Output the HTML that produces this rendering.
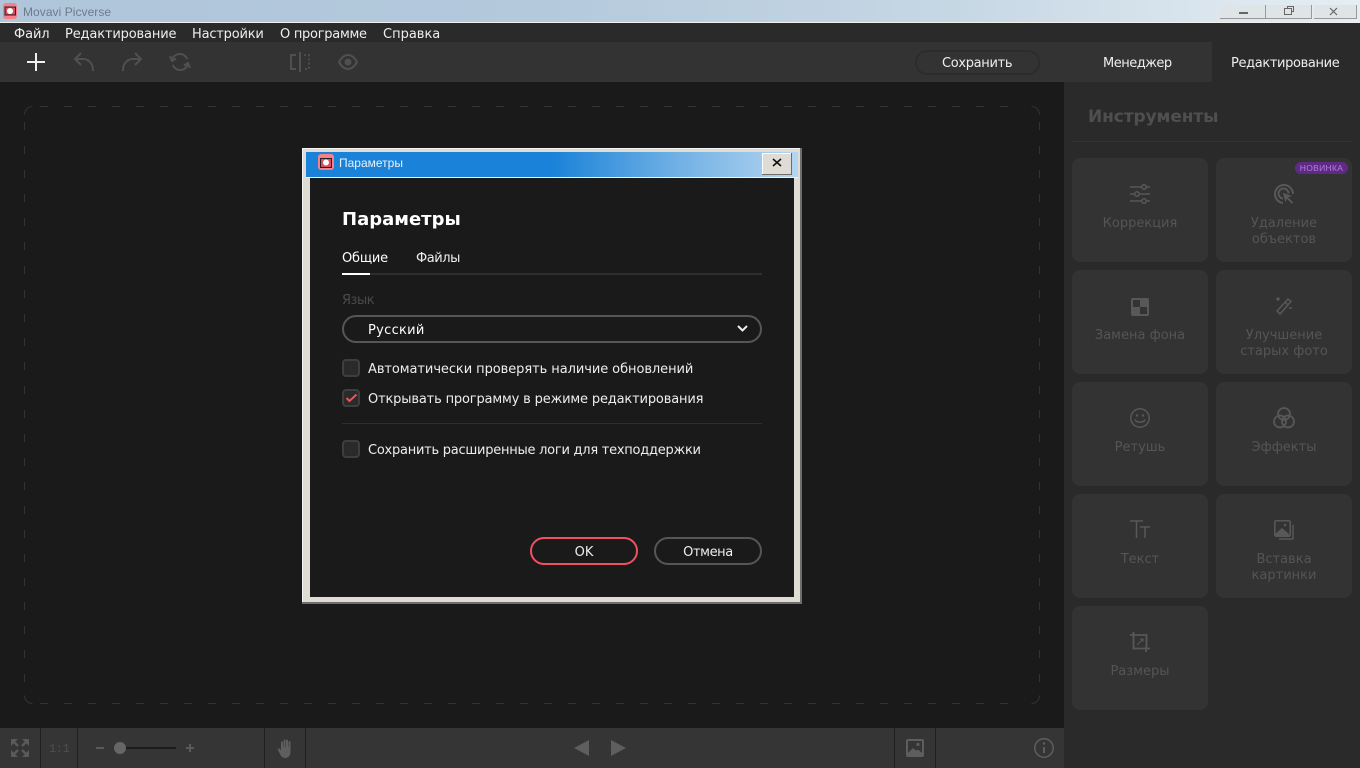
<!DOCTYPE html>
<html lang="ru"><head><meta charset="utf-8"><title>Movavi Picverse</title>
<style>
html,body{margin:0;padding:0;width:1360px;height:768px;overflow:hidden;background:#1a1a1a}
body{position:relative;font-family:"DejaVu Sans","Liberation Sans",sans-serif;font-size:13px;color:#eee}
.a{position:absolute}
.t{position:absolute;white-space:nowrap;line-height:16px}
svg{position:absolute;overflow:visible}
.card{position:absolute;width:136px;height:104px;background:#333;border-radius:8px}
.lb{position:absolute;left:0;width:136px;top:58px;text-align:center;color:#555;line-height:16px;font-size:13px}
.cb{position:absolute;left:342px;width:18px;height:18px;box-sizing:border-box;border:2px solid #3e3e3e;background:#2a2a2a;border-radius:4px}
</style></head><body>
<div class="a" style="left:0;top:0;width:1360px;height:22px;background:linear-gradient(90deg,#afc5da 0%,#b4c9dc 40%,#c6d7e4 70%,#e6eef4 100%)"></div>
<div class="a" style="left:0;top:22px;width:1360px;height:1px;background:#f2f0ea"></div>
<svg style="left:3px;top:3px" width="14" height="16"><rect width="14" height="16" rx="3" fill="#f8808c"/><rect x="2" y="4" width="10.500" height="8" fill="#d85060" stroke="#222"/><circle cx="7" cy="8" r="3" fill="#fff"/></svg>
<div class="t" style="left:23px;top:4px;font-family:'Liberation Sans',sans-serif;color:#6d7b8c;font-size:12px;letter-spacing:.05px">Movavi Picverse</div>
<div class="a" style="left:1220px;top:5px;width:45px;height:13px;background:#dfe4e7;border-bottom:1px solid #999;border-right:1px solid #999"></div>
<div class="a" style="left:1266px;top:5px;width:45px;height:13px;background:#dfe4e7;border-bottom:1px solid #999;border-right:1px solid #999"></div>
<div class="a" style="left:1314px;top:5px;width:42px;height:13px;background:#dfe4e7;border-bottom:1px solid #999;border-right:1px solid #999"></div>
<div class="a" style="left:1239px;top:12px;width:9px;height:2px;background:#666"></div>
<svg style="left:1284px;top:6px" width="12" height="10" fill="none" stroke="#666"><path d="M3.500 2.500V.5h6v5h-2M.5 2.500h7v6h-7z"/></svg>
<svg style="left:1329px;top:7px" width="10" height="10" fill="none" stroke="#666" stroke-width="1.200"><path d="M1 1l7 7M8 1l-7 7"/></svg>

<div class="a" style="left:0;top:23px;width:1360px;height:19px;background:#2a2a2a"></div>
<div class="t" style="left:14px;top:27px;letter-spacing:-.1px">Файл</div>
<div class="t" style="left:65px;top:27px;letter-spacing:-.15px">Редактирование</div>
<div class="t" style="left:192px;top:27px;letter-spacing:-.2px">Настройки</div>
<div class="t" style="left:280px;top:27px;letter-spacing:-.27px">О программе</div>
<div class="t" style="left:383px;top:27px">Справка</div>

<div class="a" style="left:0;top:42px;width:1212px;height:40px;background:#333"></div>
<div class="a" style="left:1212px;top:42px;width:148px;height:40px;background:#2a2a2a"></div>
<svg style="left:27px;top:53px" width="18" height="18" stroke="#f0f0f0" stroke-width="2"><path d="M0 9h18M9 0v18"/></svg>
<svg style="left:73px;top:51px" width="22" height="22" fill="none" stroke="#505050" stroke-width="2"><path d="M20 20v-1c0-6-4-11-10-11H2M8 2L2 8l6 6"/></svg>
<svg style="left:121px;top:51px" width="22" height="22" fill="none" stroke="#505050" stroke-width="2"><path d="M2 20v-1c0-6 4-11 10-11h8M14 2l6 6-6 6"/></svg>
<svg style="left:169px;top:52px" width="22" height="20" fill="none" stroke="#505050" stroke-width="2"><path d="M3 8a8 8 0 0 1 14-3l1.500 2M19 12a8 8 0 0 1-14 3l-1.500-2"/><path d="M1 4l2 5 4-2.500M21 16l-2-5-4 2.500"/></svg>
<svg style="left:290px;top:52px" width="20" height="20" fill="none" stroke="#505050" stroke-width="2"><path d="M6 3H1v14h5M10 0v20"/><path d="M14 3h5v14h-5" stroke-dasharray="2 2.200" stroke-width="1.800"/></svg>
<svg style="left:338px;top:54px" width="20" height="16" fill="none" stroke="#505050" stroke-width="2"><path d="M1 8c2.500-4.500 5.500-7 9-7s6.500 2.500 9 7c-2.500 4.500-5.500 7-9 7s-6.500-2.500-9-7z"/><circle cx="10" cy="8" r="3.500" fill="#505050" stroke="none"/></svg>
<div class="a" style="left:915px;top:50px;width:121px;height:21px;border:2px solid #2c2c2c;border-radius:12px"></div>
<div class="t" style="left:942px;top:56px;color:#eee;letter-spacing:-.33px">Сохранить</div>
<div class="t" style="left:1103px;top:56px;color:#eee;letter-spacing:-.5px">Менеджер</div>
<div class="t" style="left:1231px;top:56px;color:#eee;letter-spacing:-.36px">Редактирование</div>

<div class="a" style="left:1064px;top:82px;width:296px;height:686px;background:#2a2a2a"></div>
<svg style="left:0;top:0" width="1064" height="728" fill="none" stroke="#333" stroke-width="1">
<path d="M24.500 114.500a8 8 0 0 1 8-8M1031.500 106.500a8 8 0 0 1 8 8M1039.500 695.500a8 8 0 0 1-8 8M32.500 703.500a8 8 0 0 1-8-8"/>
<path d="M40 106.500H1024M40 703.500H1024M24.500 122V690M1039.500 122V690" stroke-dasharray="8 16"/>
</svg>
<div class="t" style="left:1088px;top:108px;font-size:17px;font-weight:bold;color:#4f4f4f;line-height:18px;letter-spacing:-.1px">Инструменты</div>
<div class="a" style="left:1072px;top:141px;width:280px;height:1px;background:#333"></div>

<div class="card" style="left:1072px;top:158px"><div class="lb">Коррекция</div>
<svg style="left:58px;top:26px" width="20" height="20" fill="#333" stroke="#585858" stroke-width="1.500"><path d="M0 3h20M0 10h20M0 17h20"/><circle cx="14" cy="3" r="2.200"/><circle cx="7" cy="10" r="2.200"/><circle cx="14" cy="17" r="2.200"/></svg></div>
<div class="card" style="left:1216px;top:158px"><div class="lb">Удаление<br>объектов</div>
<svg style="left:58px;top:26px" width="21" height="21" fill="none" stroke="#585858" stroke-width="2"><path d="M9 19a9 9 0 1 1 10-9"/><path d="M9 14.500a5 5 0 1 1 5.500-5"/><path d="M8 8l12 4-5 1.500 5 5-2 2-5-5-1.500 4.500z" fill="#585858" stroke="#333" stroke-width="1"/></svg></div>
<div class="a" style="left:1295px;top:162px;width:53px;height:12px;background:#5f2a85;border-radius:6px;color:#b080d8;font-size:8.500px;line-height:12px;text-align:center;font-family:'Liberation Sans',sans-serif;letter-spacing:.3px">НОВИНКА</div>
<div class="card" style="left:1072px;top:270px"><div class="lb">Замена фона</div>
<svg style="left:59px;top:28px" width="18" height="18"><rect width="18" height="18" rx="2" fill="#585858"/><rect x="2" y="2" width="7" height="7" fill="#333"/><rect x="9" y="9" width="7" height="7" fill="#333"/></svg></div>
<div class="card" style="left:1216px;top:270px"><div class="lb">Улучшение<br>старых фото</div>
<svg style="left:58px;top:26px" width="20" height="20" fill="none" stroke="#585858" stroke-width="1.500"><path d="M3 15L14 3l3 2.500L6 18z"/><path d="M11 6l3 3M2 3h4M4 1v4M15 12h3"/></svg></div>
<div class="card" style="left:1072px;top:382px"><div class="lb">Ретушь</div>
<svg style="left:58px;top:26px" width="20" height="20" fill="none" stroke="#585858" stroke-width="1.500"><circle cx="10" cy="10" r="9.200"/><circle cx="7" cy="7.500" r="1.200" fill="#585858" stroke="none"/><circle cx="13" cy="7.500" r="1.200" fill="#585858" stroke="none"/><path d="M5 11.500c1 3.500 9 3.500 10 0"/></svg></div>
<div class="card" style="left:1216px;top:382px"><div class="lb">Эффекты</div>
<svg style="left:57px;top:25px" width="22" height="22" fill="none" stroke="#585858" stroke-width="1.800"><circle cx="11" cy="7" r="6"/><circle cx="7" cy="14.500" r="6"/><circle cx="15" cy="14.500" r="6"/></svg></div>
<div class="card" style="left:1072px;top:494px"><div class="lb">Текст</div>
<svg style="left:58px;top:26px" width="20" height="20" fill="none" stroke="#585858" stroke-width="1.500"><path d="M0 1h13M6.500 1v17M10 7h10M15 7v11"/></svg></div>
<div class="card" style="left:1216px;top:494px"><div class="lb">Вставка<br>картинки</div>
<svg style="left:58px;top:26px" width="20" height="20"><rect x=".75" y=".75" width="15.500" height="15.500" rx="1.500" fill="none" stroke="#585858" stroke-width="1.500"/><path d="M1 14l7-6 7 6v2H1z" fill="#585858"/><circle cx="11" cy="5" r="1.300" fill="#585858"/><path d="M19 5v13.500a.5.500 0 0 1-.5.500H5" fill="none" stroke="#585858" stroke-width="1.500"/></svg></div>
<div class="card" style="left:1072px;top:606px"><div class="lb">Размеры</div>
<svg style="left:58px;top:26px" width="20" height="20" fill="none" stroke="#585858" stroke-width="1.800"><path d="M0 3h16.500V16M3.500 0v16.500H20M16 20v-3"/><path d="M7 13l6-6M10 7h3v3" stroke-width="1"/></svg></div>

<div class="a" style="left:0;top:728px;width:1064px;height:40px;background:#353535"></div>
<div class="a" style="left:40px;top:728px;width:1px;height:40px;background:#1f1f1f"></div>
<div class="a" style="left:77px;top:728px;width:1px;height:40px;background:#1f1f1f"></div>
<div class="a" style="left:264px;top:728px;width:1px;height:40px;background:#1f1f1f"></div>
<div class="a" style="left:305px;top:728px;width:1px;height:40px;background:#1f1f1f"></div>
<div class="a" style="left:894px;top:728px;width:1px;height:40px;background:#1f1f1f"></div>
<div class="a" style="left:935px;top:728px;width:1px;height:40px;background:#1f1f1f"></div>
<svg style="left:11px;top:739px" width="18" height="18" fill="#5a5a5a"><path d="M0 0h7L0 7zM18 0v7L11 0zM0 18v-7l7 7zM18 18h-7l7-7z"/><path d="M3 3l4 4M15 3l-4 4M3 15l4-4M15 15l-4-4" stroke="#5a5a5a" stroke-width="2.400"/></svg>
<div class="t" style="left:49px;top:741px;color:#4f4f4f;font-size:12px;font-family:'Liberation Mono',monospace;letter-spacing:-.4px">1:1</div>
<div class="a" style="left:96px;top:747px;width:8px;height:2px;background:#5a5a5a"></div>
<div class="a" style="left:120px;top:747px;width:56px;height:2px;background:#1c1c1c"></div>
<div class="a" style="left:114px;top:742px;width:12px;height:12px;border-radius:50%;background:#666"></div>
<svg style="left:186px;top:744px" width="8" height="8" stroke="#5a5a5a" stroke-width="2"><path d="M0 4h8M4 0v8"/></svg>
<svg style="left:278px;top:739px" width="15" height="19" fill="#5e5e5e"><path d="M3 3.500a1 1 0 0 1 2 0V8h.5V1.500a1 1 0 0 1 2 0V8H8V1.500a1 1 0 0 1 2 0V8h.5V3a1 1 0 0 1 2 0v10c0 3.500-2 6-5.500 6-3 0-4-2-5-4l-2-4a1 1 0 0 1 2-1l1 1.500z"/></svg>
<svg style="left:574px;top:740px" width="16" height="16" fill="#5e5e5e"><path d="M15 0v16L0 8z"/></svg>
<svg style="left:611px;top:740px" width="15" height="16" fill="#5e5e5e"><path d="M0 0v16l15-8z"/></svg>
<svg style="left:906px;top:739px" width="18" height="18"><rect x="1" y="1" width="16" height="16" rx="1" fill="none" stroke="#5e5e5e" stroke-width="2"/><path d="M2 14l5-5 3 2.500 2-1 4 3.500v2H2z" fill="#5e5e5e"/><circle cx="12" cy="5.500" r="1.600" fill="#5e5e5e"/></svg>
<svg style="left:1034px;top:738px" width="20" height="20" fill="none" stroke="#5e5e5e" stroke-width="1.500"><circle cx="10" cy="10" r="9.200"/><path d="M10 9v6" stroke-width="2"/><circle cx="10" cy="5.500" r="1.200" fill="#5e5e5e" stroke="none"/></svg>

<!-- dialog -->
<div class="a" style="left:302px;top:148px;width:500px;height:456px;background:#dfdcd5;box-shadow:inset -2px -2px 0 #6e6e6e,inset 1px 1px 0 #f4f4f4"></div>
<div class="a" style="left:306px;top:152px;width:492px;height:25px;background:linear-gradient(90deg,#1a82d8 0%,#1a82d8 50%,#6fb0e4 75%,#b5d5f0 100%)"></div>
<div class="a" style="left:306px;top:177px;width:492px;height:1px;background:#f4f4f4"></div>
<div class="a" style="left:310px;top:178px;width:484px;height:419px;background:#1a1a1a"></div>
<svg style="left:318px;top:154px" width="16" height="16"><rect width="16" height="16" rx="3" fill="#f8808c"/><rect x="2.500" y="4.500" width="11" height="9" fill="#d85060" stroke="#222"/><circle cx="8" cy="8.500" r="3" fill="#fff"/></svg>
<div class="t" style="left:339px;top:155px;font-size:12px;font-family:'Liberation Sans',sans-serif;color:#e8f2fa">Параметры</div>
<div class="a" style="left:762px;top:153px;width:30px;height:22px;background:#dfdcd5;box-shadow:inset -1px -1px 0 #6e6e6e,inset 1px 1px 0 #fff"></div>
<svg style="left:773px;top:159px" width="8" height="7" fill="none" stroke="#111" stroke-width="1.600"><path d="M0 0l8 7M8 0L0 7"/></svg>
<div class="t" style="left:342px;top:209px;font-size:18px;font-weight:bold;line-height:22px;color:#fff">Параметры</div>
<div class="t" style="left:342px;top:251px;color:#fff;letter-spacing:-.2px">Общие</div>
<div class="t" style="left:416px;top:251px;color:#eee;letter-spacing:-.45px">Файлы</div>
<div class="a" style="left:342px;top:273px;width:420px;height:2px;background:#2e2e2e"></div>
<div class="a" style="left:342px;top:273px;width:28px;height:2px;background:#fff"></div>
<div class="t" style="left:342px;top:293px;color:#4a4a4a;letter-spacing:-.5px">Язык</div>
<div class="a" style="left:342px;top:315px;width:416px;height:24px;border:2px solid #565656;border-radius:14px"></div>
<div class="t" style="left:368px;top:323px;color:#fff;letter-spacing:.3px">Русский</div>
<svg style="left:737px;top:325px" width="11" height="8" fill="none" stroke="#eee" stroke-width="2"><path d="M1 1l4.500 4.500L10 1"/></svg>
<div class="cb" style="top:359px"></div>
<div class="t" style="left:368px;top:362px;color:#eee;letter-spacing:-.07px">Автоматически проверять наличие обновлений</div>
<div class="cb" style="top:389px"></div>
<svg style="left:346px;top:394px" width="11" height="8" fill="none" stroke="#f0505f" stroke-width="2"><path d="M.5 4l3 3L10.500.5"/></svg>
<div class="t" style="left:368px;top:392px;color:#eee;letter-spacing:-.16px">Открывать программу в режиме редактирования</div>
<div class="a" style="left:342px;top:423px;width:420px;height:1px;background:#2e2e2e"></div>
<div class="cb" style="top:440px"></div>
<div class="t" style="left:368px;top:443px;color:#eee;letter-spacing:-.25px">Сохранить расширенные логи для техподдержки</div>
<div class="a" style="left:530px;top:537px;width:104px;height:24px;border:2px solid #f0505f;border-radius:14px;text-align:center;line-height:28px;color:#eee">OK</div>
<div class="a" style="left:654px;top:537px;width:104px;height:24px;border:2px solid #565656;border-radius:14px;text-align:center;line-height:28px;color:#eee;letter-spacing:-.4px">Отмена</div>
</body></html>
